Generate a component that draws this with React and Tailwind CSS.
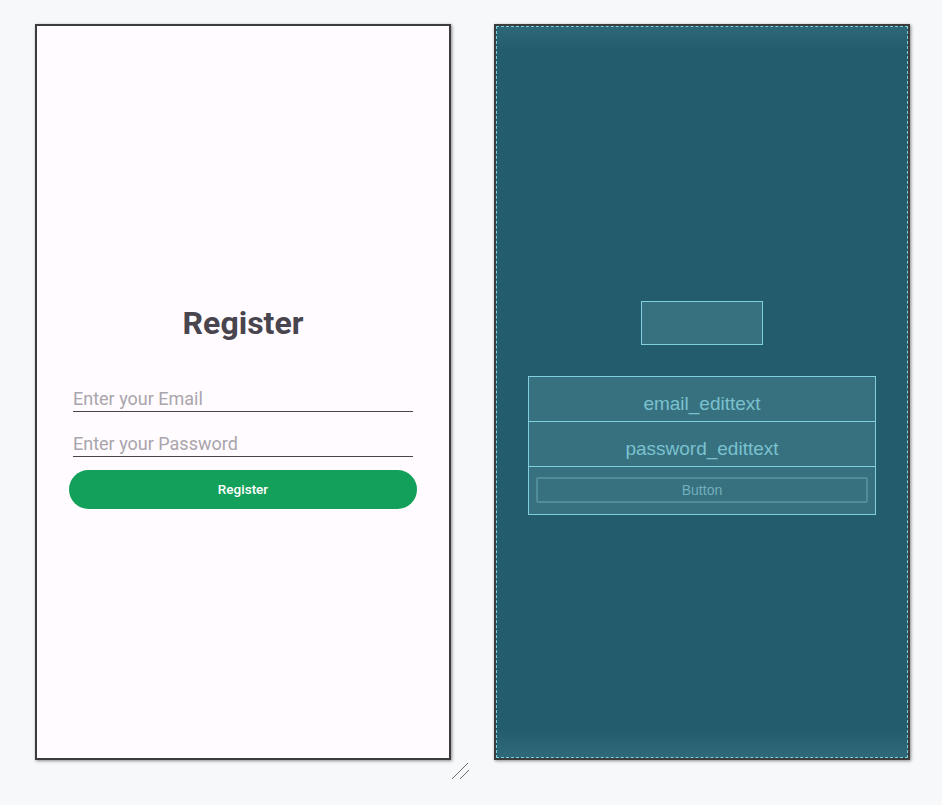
import React from "react";

const font = { fontFamily: "Roboto, 'Liberation Sans', sans-serif" };
const arial = { fontFamily: "'Liberation Sans', Arial, sans-serif" };

const Field = ({ placeholder }) => (
  <div className="h-[45px] px-[4px] pb-[9px] flex items-end">
    <div className="w-full border-b border-[#49454f] pb-[1px] text-[18px] leading-[22px] text-[#a9a5ac]">
      {placeholder}
    </div>
  </div>
);

const PhoneFrame = ({ children, className }) => (
  <div
    className={`w-[416px] h-[736px] border-2 border-[#3c3c3c] shadow-[1px_1px_3px_rgba(0,0,0,0.45)] ${className}`}
  >
    {children}
  </div>
);

const DesignView = () => (
  <PhoneFrame className="bg-[#fffbfe]">
    <div className="flex flex-col px-[32px] pt-[275px]">
      <div className="h-[43px] flex items-center justify-center text-[32px] font-bold text-[#49454f]">
        Register
      </div>
      <div className="mt-[32px]">
        <Field placeholder="Enter your Email" />
        <Field placeholder="Enter your Password" />
        <div className="h-[48px] pt-[4px]">
          <button className="w-full h-[39px] rounded-full bg-[#12a05a] text-white text-[13.5px] font-medium">
            Register
          </button>
        </div>
      </div>
    </div>
  </PhoneFrame>
);

const BlueprintView = () => (
  <PhoneFrame className="bg-[#225c6d]">
    <div className="h-full border border-dashed border-[#7fcfdf] flex flex-col" style={arial}>
      <div className="h-[22px] bg-gradient-to-b from-[#2d6878] to-[#225c6d]" />
      <div className="flex-1 flex flex-col px-[31px] pt-[252px]">
        <div className="h-[44px] w-[122px] mx-auto bg-[#37717f] border border-[#7fcfdf]" />
        <div className="mt-[31px] bg-[#37717f] border border-[#7fcfdf]">
          <div className="h-[45px] flex items-end justify-center pb-[3px] text-[19px] text-[#7bc1cf] border-b border-[#7fcfdf]">
            email_edittext
          </div>
          <div className="h-[45px] flex items-end justify-center pb-[3px] text-[19px] text-[#7bc1cf] border-b border-[#7fcfdf]">
            password_edittext
          </div>
          <div className="h-[47px] px-[7px] pt-[10px]">
            <div className="h-[26px] border-2 border-[#4f8d9b] rounded-[2px] flex items-center justify-center text-[14px] text-[#72aebc]">
              Button
            </div>
          </div>
        </div>
      </div>
      <div className="h-[28px] bg-gradient-to-b from-[#225c6d] to-[#2f6a7a]" />
    </div>
  </PhoneFrame>
);

export default function App() {
  return (
    <div className="w-[942px] h-[805px] bg-[#f7f8f9]" style={font}>
      <div className="flex gap-[43px] pl-[35px] pt-[24px]">
        <DesignView />
        <BlueprintView />
      </div>
      {/* resize grip */}
      <svg className="ml-[451px] mt-[2px]" width="20" height="18" viewBox="0 0 20 18">
        <line x1="1" y1="17" x2="17" y2="1" stroke="#6b6b6b" strokeWidth="1" />
        <line x1="9" y1="17" x2="18" y2="8" stroke="#6b6b6b" strokeWidth="1" />
      </svg>
    </div>
  );
}
